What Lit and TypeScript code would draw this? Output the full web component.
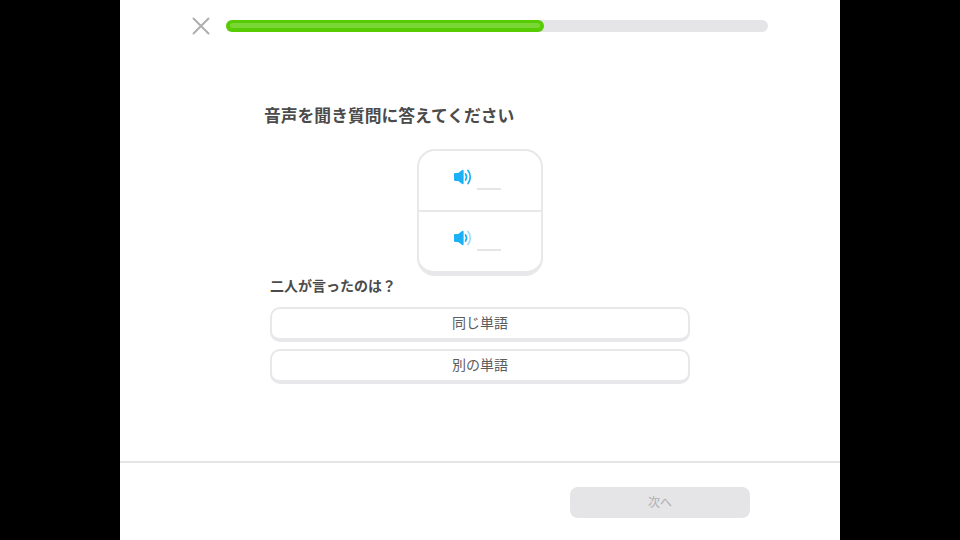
import { LitElement, html, css } from 'lit';
import { customElement, property } from 'lit/decorators.js';

@customElement('speaker-line')
export class SpeakerLine extends LitElement {
  @property({ type: Boolean }) faded = false;

  static styles = css`
    :host {
      display: flex;
      height: 59px;
      box-sizing: border-box;
      padding: 16px 0 0 35px;
    }
    svg {
      display: block;
      width: 20px;
      height: 20px;
    }
    .blank {
      width: 24px;
      height: 2px;
      margin: 21px 0 0 3px;
      background: #e5e4e6;
    }
  `;

  render() {
    const outer = this.faded ? '#9fdcfa' : '#1cb0f6';
    return html`
      <svg viewBox="0 0 20 20" fill="none">
        <path d="M1.200 6h3L8.200 3c.6-.5 1.400-.1 1.400.7v12.600c0 .8-.8 1.200-1.400.7L4.200 14h-3C.5 14 0 13.500 0 12.800V7.200C0 6.500.5 6 1.200 6z" fill="#1cb0f6" />
        <path d="M11.500 7c1.300 1.800 1.300 4.200 0 6" stroke="#1cb0f6" stroke-width="1.700" stroke-linecap="round" />
        <path d="M14 3.500c3 3.600 3 9.400 0 13" stroke=${outer} stroke-width="1.700" stroke-linecap="round" />
      </svg>
      <div class="blank"></div>
    `;
  }
}

@customElement('app-root')
export class AppRoot extends LitElement {
  static styles = css`
    :host {
      display: block;
      width: 960px;
      height: 540px;
      background: #000;
      font-family: 'Liberation Sans', 'Noto Sans CJK JP', sans-serif;
    }
    .screen {
      width: 720px;
      height: 540px;
      margin: 0 auto;
      background: #fff;
      display: flex;
      flex-direction: column;
    }
    .top {
      display: flex;
      align-items: center;
      gap: 15px;
      padding: 17px 72px 0 71px;
      height: 18px;
    }
    .close {
      display: block;
      width: 20px;
      height: 20px;
      flex-shrink: 0;
    }
    .track {
      flex: 1;
      height: 12px;
      border-radius: 6px;
      background: #e5e4e6;
    }
    .fill {
      box-sizing: border-box;
      height: 12px;
      padding: 3px 4px 0;
      border-radius: 6px;
      background: #58cc02;
    }
    .fill div {
      height: 5px;
      border-radius: 3px;
      background: #79d634;
    }
    .body {
      flex: 1;
      display: flex;
      flex-direction: column;
      padding: 0 150px;
    }
    h1 {
      margin: 70px 0 0 -6px;
      font-size: 16.8px;
      line-height: 24px;
      font-weight: 700;
      color: #4b4b4b;
    }
    .dialog {
      box-sizing: border-box;
      width: 126px;
      height: 127px;
      margin: 20px auto 0;
      border: 2px solid #e8e7e9;
      border-bottom-width: 5px;
      border-radius: 18px;
      background: #fff;
    }
    .dialog speaker-line + speaker-line {
      height: 61px;
      border-top: 2px solid #e8e7e9;
    }
    h2 {
      margin: 0;
      font-size: 14px;
      line-height: 20px;
      font-weight: 700;
      color: #4b4b4b;
    }
    .choices {
      display: flex;
      flex-direction: column;
      gap: 7px;
      margin-top: 11px;
    }
    .choice {
      box-sizing: border-box;
      height: 35px;
      padding-bottom: 4px;
      border: 2px solid #e8e7e9;
      border-bottom-width: 4px;
      border-radius: 10px;
      background: #fff;
      display: flex;
      align-items: center;
      justify-content: center;
      font-size: 14px;
      color: #5c5c5c;
    }
    .footer {
      box-sizing: border-box;
      height: 79px;
      border-top: 2px solid #e5e4e6;
      padding: 24px 90px 0 0;
      display: flex;
      justify-content: flex-end;
      align-items: flex-start;
    }
    .next {
      box-sizing: border-box;
      width: 180px;
      height: 31px;
      padding-bottom: 2px;
      border-radius: 8px;
      background: #e5e4e6;
      display: flex;
      align-items: center;
      justify-content: center;
      font-size: 12px;
      color: #afafb1;
    }
  `;

  render() {
    return html`
      <div class="screen">
        <div class="top">
          <svg class="close" viewBox="0 0 20 20">
            <path d="M2.500 2.500l15 15M17.500 2.500l-15 15" stroke="#afafaf" stroke-width="2" stroke-linecap="round" />
          </svg>
          <div class="track">
            <div class="fill" style="width:${(318 / 542) * 100}%"><div></div></div>
          </div>
        </div>
        <div class="body">
          <h1>音声を聞き質問に答えてください</h1>
          <div class="dialog">
            <speaker-line></speaker-line>
            <speaker-line faded></speaker-line>
          </div>
          <h2>二人が言ったのは？</h2>
          <div class="choices">
            <div class="choice">同じ単語</div>
            <div class="choice">別の単語</div>
          </div>
        </div>
        <div class="footer"><div class="next">次へ</div></div>
      </div>
    `;
  }
}
